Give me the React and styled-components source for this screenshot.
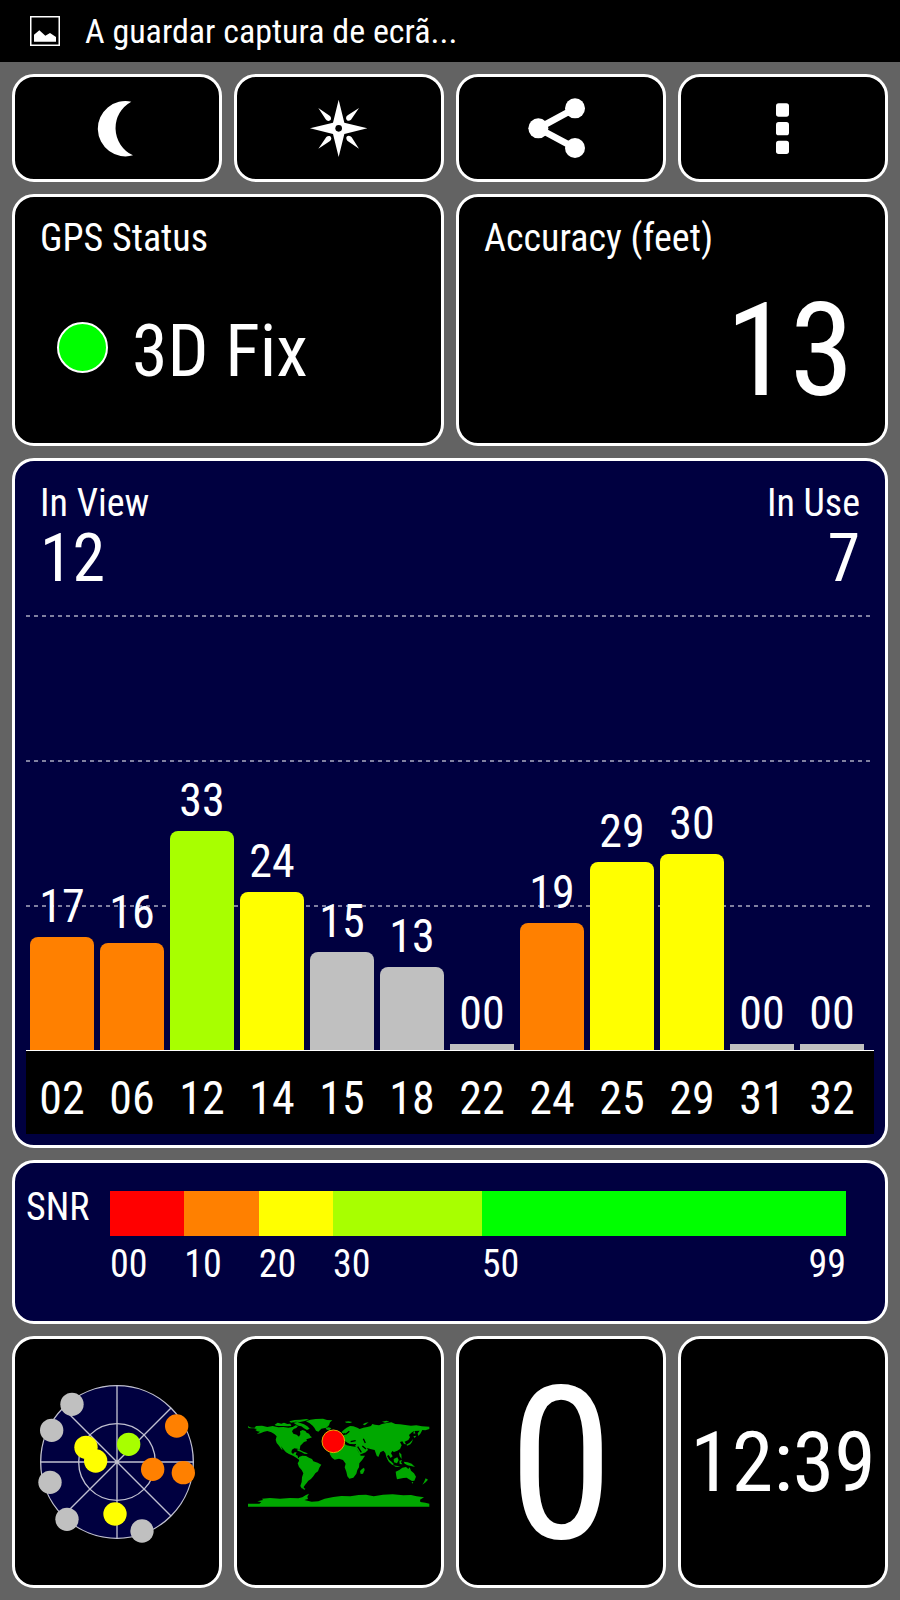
import React from "react";
import styled, { createGlobalStyle } from "styled-components";

const satellites = [
  { prn: "02", snr: "17", height: 113, color: "#ff8000" },
  { prn: "06", snr: "16", height: 107, color: "#ff8000" },
  { prn: "12", snr: "33", height: 219, color: "#a8ff00" },
  { prn: "14", snr: "24", height: 158, color: "#ffff00" },
  { prn: "15", snr: "15", height: 98, color: "#c0c0c0" },
  { prn: "18", snr: "13", height: 83, color: "#c0c0c0" },
  { prn: "22", snr: "00", height: 6, color: "#c0c0c0" },
  { prn: "24", snr: "19", height: 127, color: "#ff8000" },
  { prn: "25", snr: "29", height: 188, color: "#ffff00" },
  { prn: "29", snr: "30", height: 196, color: "#ffff00" },
  { prn: "31", snr: "00", height: 6, color: "#c0c0c0" },
  { prn: "32", snr: "00", height: 6, color: "#c0c0c0" },
];

const ranges = [
  { from: "00", span: 10, color: "#ff0000" },
  { from: "10", span: 10, color: "#ff8000" },
  { from: "20", span: 10, color: "#ffff00" },
  { from: "30", span: 20, color: "#a8ff00" },
  { from: "50", to: "99", span: 49, color: "#00ff00" },
];

const skyDots = [
  { x: -135, y: -173, color: "#c0c0c0" },
  { x: -196, y: -95, color: "#c0c0c0" },
  { x: -201, y: 61, color: "#c0c0c0" },
  { x: -150, y: 172, color: "#c0c0c0" },
  { x: 75, y: 207, color: "#c0c0c0" },
  { x: -93, y: -44, color: "#ffff00" },
  { x: -64, y: -3, color: "#ffff00" },
  { x: -6, y: 156, color: "#ffff00" },
  { x: 35, y: -53, color: "#a8ff00" },
  { x: 179, y: -108, color: "#ff8000" },
  { x: 107, y: 22, color: "#ff8000" },
  { x: 199, y: 32, color: "#ff8000" },
];

const PictureIcon = () => (
  <svg width="30" height="30" viewBox="0 0 90 90" aria-hidden="true">
    <rect x="2" y="2" width="86" height="86" fill="none" stroke="#fff" strokeWidth="5" />
    <path d="M12 77V56L28 43L46 59L60 51L78 63V77Z" fill="#fff" />
  </svg>
);

const MoonIcon = () => (
  <svg width="60" height="60" viewBox="263 293 180 180" aria-hidden="true">
    <path d="M396 304A83 83 0 1 0 401 465A90 90 0 0 1 396 304Z" fill="#fff" />
  </svg>
);

const CompassIcon = () => (
  <svg width="60" height="60" viewBox="-89 -91 180 180" aria-hidden="true">
    <g fill="#fff">
      <path d="M0 -86L17 -17L86 0L17 17L0 86L-17 17L-86 0L-17 -17Z" />
      {[0, 90, 180, 270].map((angle) => (
        <path
          key={angle}
          transform={`rotate(${angle})`}
          d="M-61 -61L-26 -37Q-22 -33 -23 -27Q-24 -23 -30 -22Q-36 -22 -39 -27Z"
        />
      ))}
    </g>
    <circle r="10" fill="#000" />
  </svg>
);

const ShareIcon = () => (
  <svg width="68" height="60" viewBox="231 114 204 180" aria-hidden="true">
    <path d="M375 145L265 205L375 264" fill="none" stroke="#fff" strokeWidth="20" />
    <circle cx="375" cy="145" r="30" fill="#fff" />
    <circle cx="265" cy="205" r="30" fill="#fff" />
    <circle cx="375" cy="264" r="30" fill="#fff" />
  </svg>
);

const MoreIcon = () => (
  <svg width="60" height="60" viewBox="909 114 180 180" aria-hidden="true">
    <g fill="#fff">
      <rect x="978" y="130" width="39" height="40" rx="8" />
      <rect x="978" y="186" width="39" height="40" rx="8" />
      <rect x="978" y="242" width="39" height="40" rx="8" />
    </g>
  </svg>
);

const SkyView = () => (
  <svg width="164" height="164" viewBox="-246 -246 492 492" role="img" aria-label="Sky view">
    <g stroke="#c0c0d0" strokeWidth="4">
      <circle r="229" fill="#000040" />
      <circle r="115" fill="none" />
      <path d="M0 -229V229M-229 0H229M-162 -162L162 162M162 -162L-162 162" />
    </g>
    {skyDots.map((dot) => (
      <circle key={`${dot.x},${dot.y}`} cx={dot.x} cy={dot.y} r="35" fill={dot.color} />
    ))}
  </svg>
);

const WorldMap = () => (
  <svg width="182" height="92" viewBox="54 49 546 276" role="img" aria-label="Position on world map">
    <g fill="#00a800">
      {/* North and Central America */}
      <path d="M52 77L58 82L65 84L74 84L78 79L96 78L112 82L128 79L145 83L160 82L175 84L188 82L197 77L204 79L199 85L191 88L186 95L190 102L200 105L207 111L211 104L210 95L218 91L226 94L230 99L237 102L241 109L246 113L239 116L229 119L231 124L222 127L217 132L211 138L210 145L208 153L203 147L193 146L186 150L184 158L189 163L194 158L200 158L197 165L203 168L204 174L211 177L207 180L200 175L189 168L177 163L168 158L160 149L153 140L158 151L154 149L147 138L140 130L137 120L140 110L133 103L124 98L112 94L102 96L91 101L80 103L90 96L82 95L76 91L81 88L71 86L59 86L52 83Z" />
      <path d="M134 75L143 69L154 72L162 69L172 73L181 72L184 79L172 80L158 79L148 79L138 78Z" />
      <path d="M190 69L202 67L211 70L222 74L232 80L239 87L231 91L222 86L214 80L205 78L197 74Z" />
      <path d="M178 65L194 61L211 60L229 58L237 60L224 64L210 67L196 66L183 69Z" />
      <path d="M200 149L210 151L220 156L229 159L234 163L223 162L214 157L203 153Z" />
      {/* Greenland and Iceland */}
      <path d="M228 65L241 60L257 58L279 57L291 61L307 62L300 68L297 77L289 84L274 87L265 96L258 93L253 84L248 78L239 71Z" />
      <path d="M287 85L296 83L304 86L299 91L290 90Z" />
      {/* South America */}
      <path d="M207 172L217 168L228 169L237 174L246 178L250 185L263 189L274 195L268 204L264 215L256 221L250 230L243 238L235 243L230 250L225 256L221 262L223 268L215 266L211 259L215 247L216 233L220 221L215 211L207 202L203 191L207 184Z" />
      <path d="M221 265L226 267L224 270L219 268Z" />
      {/* Europe and Asia */}
      <path d="M334 98L342 90L350 84L360 79L370 80L382 84L389 88L400 84L412 82L423 79L427 73L435 75L447 77L456 73L470 70L484 68L496 73L510 74L526 76L543 78L559 77L576 80L598 81L598 88L586 92L577 91L571 102L565 109L563 101L569 93L553 94L546 98L537 106L540 113L535 121L524 126L528 134L522 133L517 125L510 127L515 137L510 148L502 153L492 157L487 154L483 161L488 170L482 175L476 166L471 169L481 187L476 185L469 172L466 160L460 153L451 158L445 172L440 168L434 151L421 148L411 145L414 151L407 158L389 165L384 154L379 145L374 136L365 134L357 132L350 129L341 131L334 126L341 120L333 114L340 107L350 104L344 99L349 92L342 102Z" />
      <path d="M318 110L327 108L325 115L317 116ZM326 102L332 104L336 113L329 119L323 117L329 110Z" />
      <path d="M345 66L355 65L367 67L360 70L348 69ZM398 74L407 69L416 68L404 77ZM456 66L469 63L478 66L465 69Z" />
      {/* Africa */}
      <path d="M309 137L325 132L341 131L350 137L365 140L379 142L384 154L392 168L405 168L397 180L388 191L387 203L382 211L379 222L370 234L358 237L352 230L349 216L344 203L347 192L339 181L327 177L314 180L306 174L299 163L302 149Z" />
      <path d="M402 204L404 211L399 222L392 223L390 214L396 208Z" />
      {/* East Asian islands */}
      <path d="M529 135L538 130L545 123L549 118L546 127L541 134L532 138ZM550 110L559 108L554 115ZM549 101L554 93L556 102Z" />
      <path d="M472 177L483 185L492 194L487 196L477 187ZM491 178L502 173L506 181L501 191L492 188ZM488 197L503 199L511 202L497 201ZM508 183L516 181L513 188L517 194L509 193ZM507 158L514 164L515 178L509 170Z" />
      <path d="M521 186L533 188L545 192L555 202L543 199L533 197L524 192Z" />
      {/* Australia and New Zealand */}
      <path d="M497 216L508 211L517 204L528 202L535 208L539 203L543 213L552 221L558 231L553 243L546 244L537 239L530 234L520 235L501 239L499 230ZM545 247L550 248L547 252Z" />
      <path d="M587 236L594 240L587 248L577 255L582 247Z" />
      {/* Antarctica */}
      <path d="M52 312L88 312L94 308L82 305L99 301L96 297L120 295L150 297L180 295L205 296L217 293L228 286L237 282L232 291L234 298L223 301L245 306L265 305L284 297L310 292L334 289L361 290L386 286L408 285L431 290L459 285L488 284L520 287L543 286L560 290L582 293L570 300L571 307L586 309L598 312V321H52Z" />
    </g>
    {/* Caspian, Black, Mediterranean and Red seas, Persian Gulf, Hudson Bay */}
    <path
      d="M344 126L356 134L369 136L378 135M362 126L377 123M400 117L406 130M383 141L394 158M397 139L408 148M348 103L358 95"
      fill="none"
      stroke="#000"
      strokeWidth="4"
    />
    <circle cx="310" cy="125" r="34" fill="#ff0000" stroke="#e0b000" strokeWidth="3" />
  </svg>
);

const App = () => {
  return (
    <>
      <GlobalStyle />
      <StatusBar>
        <PictureIcon />
        <span>A guardar captura de ecrã...</span>
      </StatusBar>
      <Main>
        <QuarterRow>
          <ToolButton type="button" aria-label="Night mode">
            <MoonIcon />
          </ToolButton>
          <ToolButton type="button" aria-label="Compass">
            <CompassIcon />
          </ToolButton>
          <ToolButton type="button" aria-label="Share">
            <ShareIcon />
          </ToolButton>
          <ToolButton type="button" aria-label="More">
            <MoreIcon />
          </ToolButton>
        </QuarterRow>

        <HalfRow>
          <InfoPanel>
            <Label>GPS Status</Label>
            <Fix>
              <FixLight />
              <FixText>3D Fix</FixText>
            </Fix>
          </InfoPanel>
          <InfoPanel>
            <Label>Accuracy (feet)</Label>
            <Accuracy>13</Accuracy>
          </InfoPanel>
        </HalfRow>

        <ChartPanel>
          <ChartHeader>
            <div>
              <Label>In View</Label>
              <Count>12</Count>
            </div>
            <div>
              <Label $end>In Use</Label>
              <Count $end>7</Count>
            </div>
          </ChartHeader>
          <Plot>
            {satellites.map((sat) => (
              <div key={sat.prn}>
                <BarValue>{sat.snr}</BarValue>
                <Bar
                  $color={sat.color}
                  $flat={sat.snr === "00"}
                  style={{ height: sat.height }}
                />
              </div>
            ))}
          </Plot>
          <Axis>
            {satellites.map((sat) => (
              <AxisLabel key={sat.prn}>{sat.prn}</AxisLabel>
            ))}
          </Axis>
        </ChartPanel>

        <LegendPanel>
          <LegendTitle>SNR</LegendTitle>
          <Scale>
            {ranges.map((range) => (
              <Range key={range.from} $span={range.span}>
                <RangeColor $color={range.color} />
                <RangeLabels>
                  <span>{range.from}</span>
                  {range.to && <span>{range.to}</span>}
                </RangeLabels>
              </Range>
            ))}
          </Scale>
        </LegendPanel>

        <QuarterRow>
          <Tile>
            <SkyView />
          </Tile>
          <Tile>
            <WorldMap />
          </Tile>
          <Tile>
            <Speed>0</Speed>
          </Tile>
          <Tile>
            <Clock>12:39</Clock>
          </Tile>
        </QuarterRow>
      </Main>
    </>
  );
};

const GlobalStyle = createGlobalStyle`
  * {
    box-sizing: border-box;
  }
  body {
    margin: 0;
    background: #636363;
    color: #fff;
    font-family: "Roboto Condensed", "Liberation Sans Narrow", Roboto, sans-serif;
    font-weight: 400;
  }
  svg {
    display: block;
    flex-shrink: 0;
  }
`;

const StatusBar = styled.header`
  display: flex;
  align-items: center;
  gap: 25px;
  height: 62px;
  padding: 0 30px;
  background: #000;
  font-size: 34px;
  line-height: 44px;
`;

const Main = styled.main`
  display: grid;
  gap: 12px;
  padding: 12px;
`;

const QuarterRow = styled.div`
  display: grid;
  grid-template-columns: repeat(4, minmax(0, 1fr));
  gap: 12px;
`;

const HalfRow = styled.div`
  display: grid;
  grid-template-columns: repeat(2, minmax(0, 1fr));
  gap: 12px;
`;

const ToolButton = styled.button`
  display: flex;
  align-items: center;
  justify-content: center;
  height: 108px;
  padding: 0;
  background: #000;
  border: 3px solid #fff;
  border-radius: 22px;
`;

const Panel = styled.section`
  background: #000040;
  border: 3px solid #fff;
  border-radius: 22px;
`;

const InfoPanel = styled(Panel)`
  min-height: 252px;
  padding: 19px 31px 0 25px;
  background: #000;
`;

const Label = styled.div`
  font-size: 38px;
  line-height: 44px;
  text-align: ${(props) => (props.$end ? "right" : "left")};
`;

const Fix = styled.div`
  display: flex;
  align-items: flex-start;
  gap: 24px;
  padding: 54px 0 0 17px;
`;

const FixLight = styled.span`
  width: 51px;
  height: 51px;
  margin-top: 8px;
  background: #00ff00;
  border: 2px solid #fff;
  border-radius: 50%;
`;

const FixText = styled.span`
  font-size: 72px;
  line-height: 76px;
`;

const Accuracy = styled.div`
  padding-top: 25px;
  font-size: 130px;
  line-height: 131px;
  text-align: right;
`;

const ChartPanel = styled(Panel)`
  padding: 20px 11px 11px;
`;

const ChartHeader = styled.div`
  display: flex;
  justify-content: space-between;
  padding: 0 14px 22px;
`;

const Count = styled.div`
  font-size: 66px;
  line-height: 68px;
  text-align: ${(props) => (props.$end ? "right" : "left")};
`;

/* dashed guide every 145px, cut into dashes by the panel colour */
const Plot = styled.div`
  display: grid;
  grid-template-columns: repeat(12, minmax(0, 1fr));
  gap: 6px;
  align-items: end;
  height: 436px;
  padding: 0 10px 0 4px;
  border-bottom: 1px solid #fff;
  background-image: repeating-linear-gradient(
      90deg,
      transparent 0 4px,
      #000040 4px 8px
    ),
    repeating-linear-gradient(180deg, #8080a0 0 2px, transparent 2px 145px);
`;

const BarValue = styled.div`
  margin-bottom: 8px;
  font-size: 46px;
  line-height: 46px;
  text-align: center;
`;

const Bar = styled.div`
  background: ${(props) => props.$color};
  border-radius: ${(props) => (props.$flat ? "0" : "8px 8px 0 0")};
`;

const Axis = styled.div`
  display: grid;
  grid-template-columns: repeat(12, minmax(0, 1fr));
  gap: 6px;
  padding: 24px 10px 13px 4px;
  background: #000;
`;

const AxisLabel = styled.div`
  font-size: 46px;
  line-height: 46px;
  text-align: center;
`;

const LegendPanel = styled(Panel)`
  display: flex;
  min-height: 164px;
  padding: 28px 39px 0 11px;
`;

const LegendTitle = styled.div`
  flex: 0 0 84px;
  margin-top: -6px;
  font-size: 38px;
  line-height: 44px;
`;

const Scale = styled.div`
  display: flex;
  flex: 1;
`;

const Range = styled.div`
  flex: ${(props) => props.$span} 1 0;
  min-width: 0;
`;

const RangeColor = styled.div`
  height: 45px;
  background: ${(props) => props.$color};
`;

const RangeLabels = styled.div`
  display: flex;
  justify-content: space-between;
  padding-top: 6px;
  font-size: 38px;
  line-height: 44px;
`;

const Tile = styled.section`
  display: flex;
  align-items: center;
  justify-content: center;
  height: 252px;
  background: #000;
  border: 3px solid #fff;
  border-radius: 22px;
`;

const Speed = styled.div`
  padding-top: 6px;
  font-size: 214px;
  line-height: 214px;
`;

const Clock = styled.div`
  padding-top: 2px;
  font-size: 84px;
  line-height: 84px;
`;

export default App;
